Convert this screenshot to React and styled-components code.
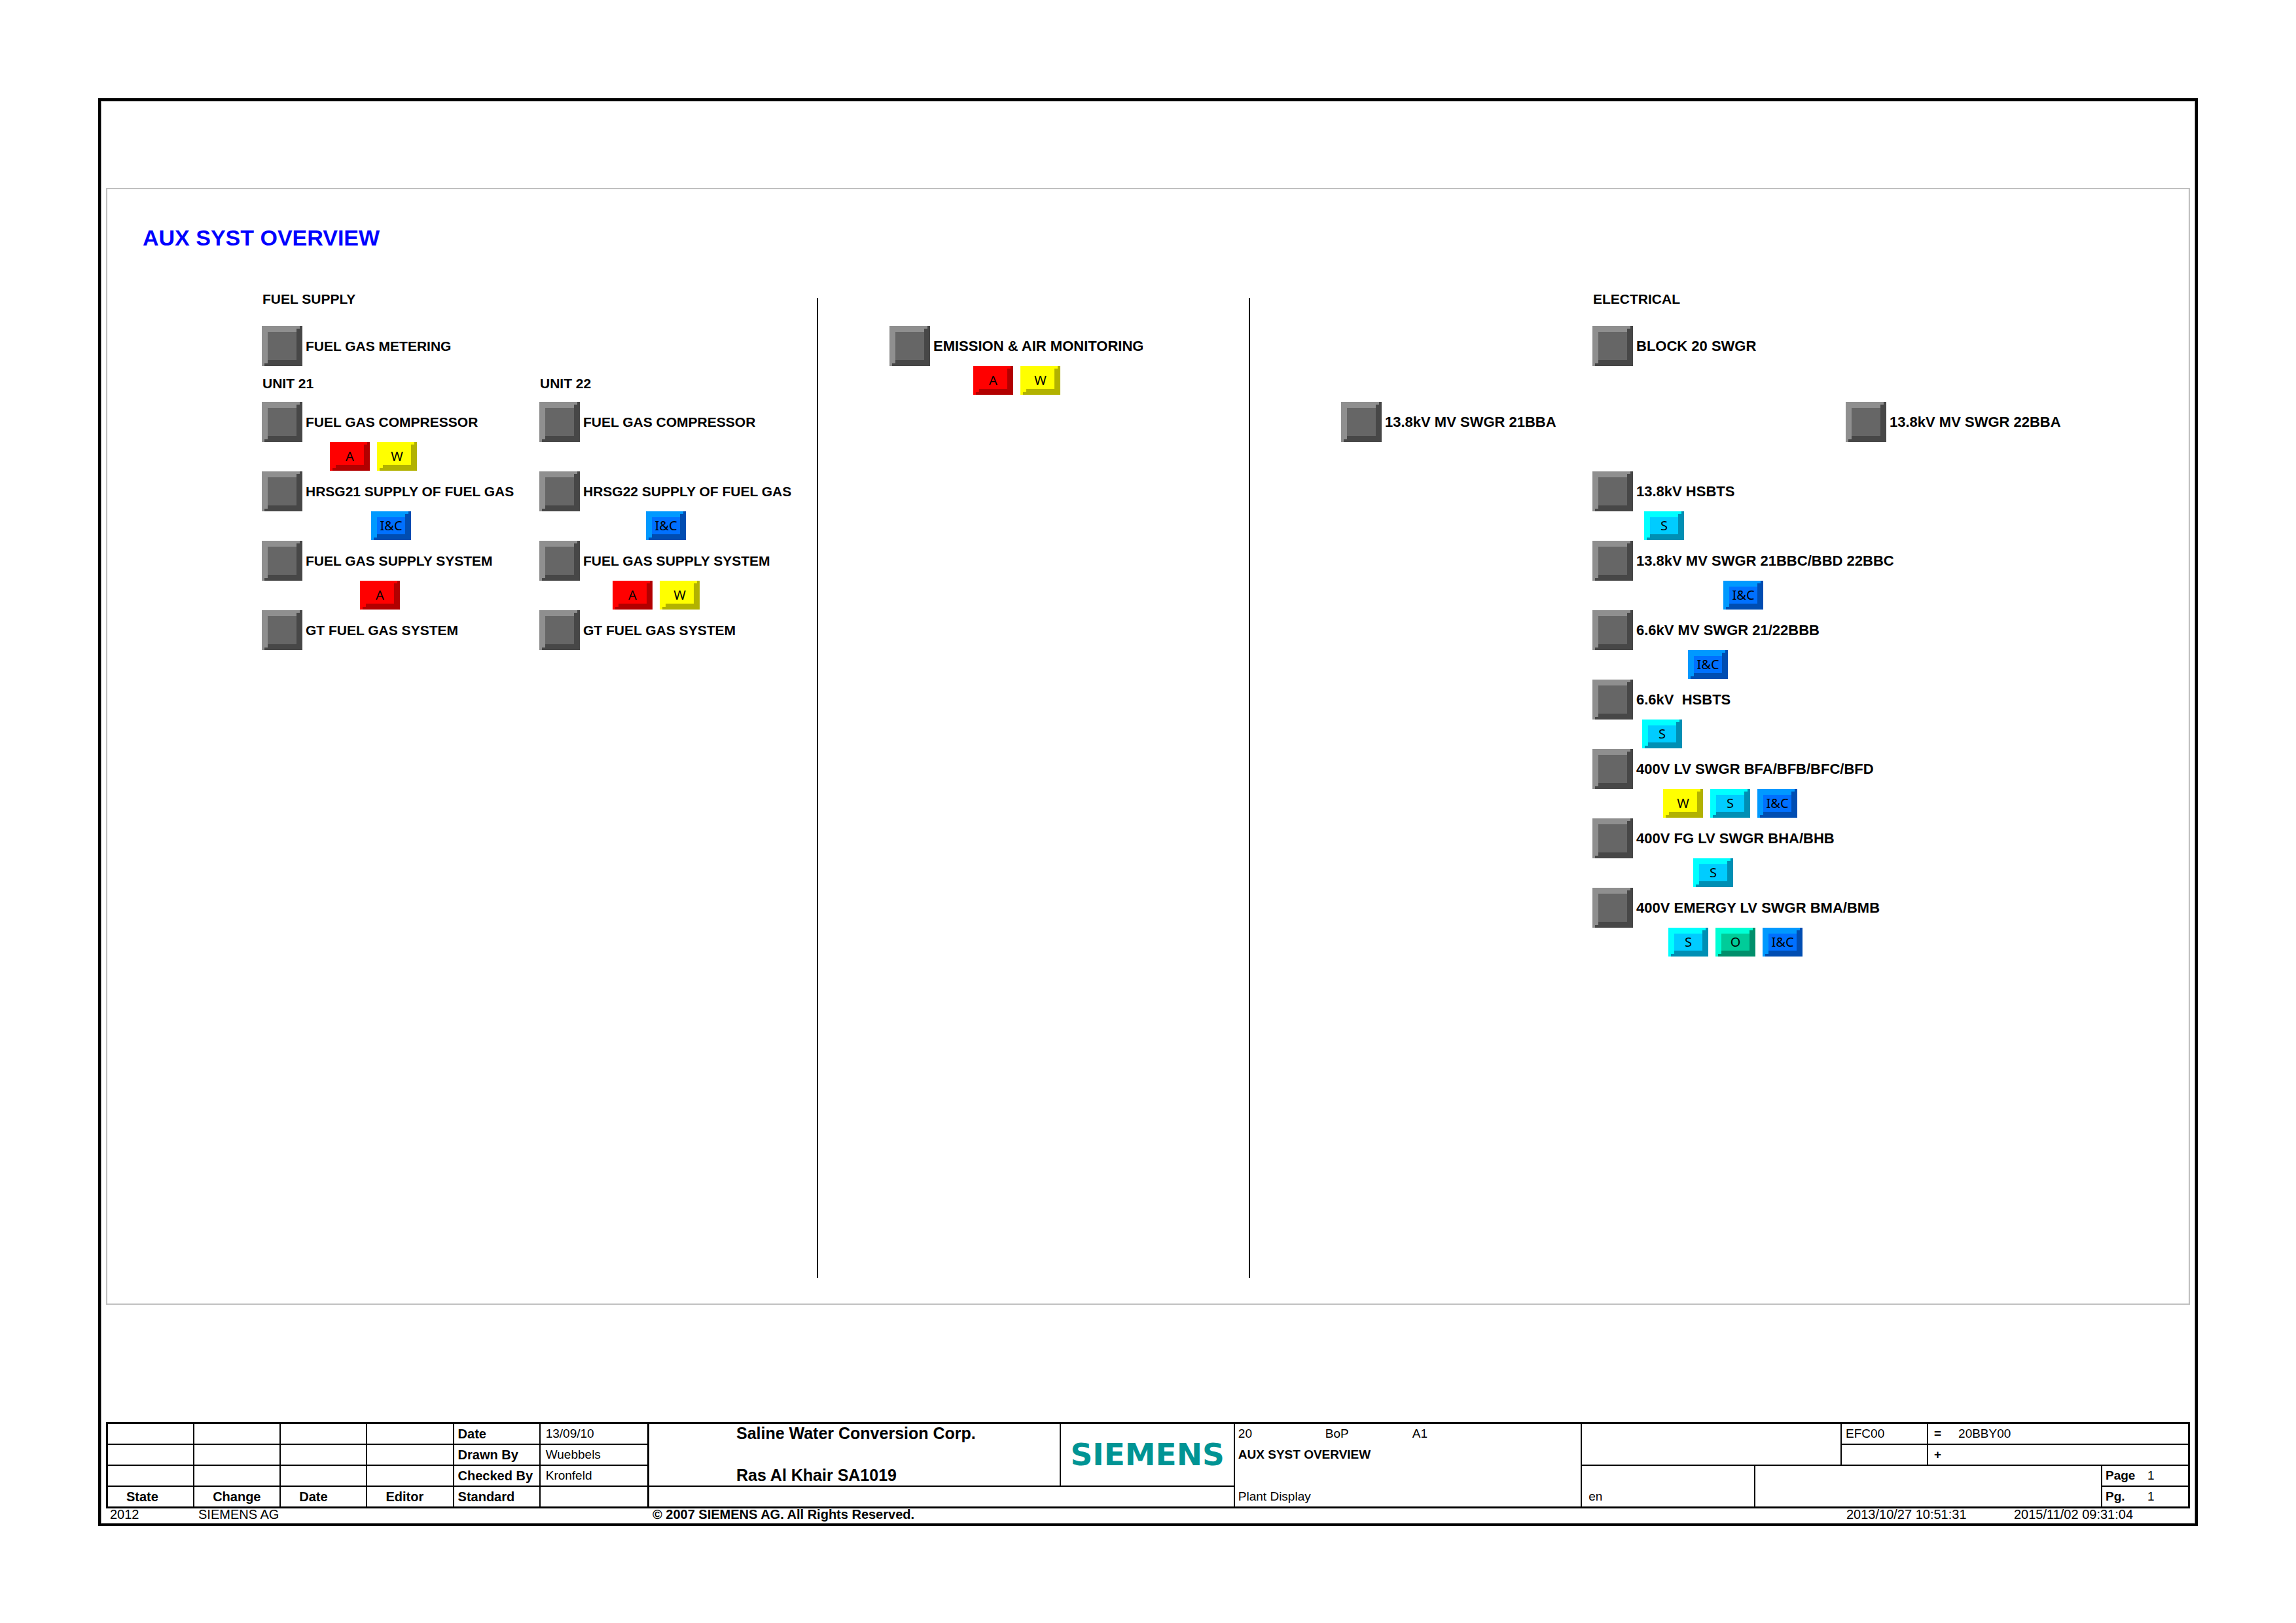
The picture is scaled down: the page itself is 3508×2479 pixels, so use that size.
import React from 'react';
import styled, { createGlobalStyle, css } from 'styled-components';

const GlobalStyle = createGlobalStyle`
  *, *::before, *::after { box-sizing: border-box; }
  body {
    margin: 0;
    background: #fff;
    color: #000;
    font-family: "Liberation Sans", Arial, Helvetica, sans-serif;
  }
`;

const TONES = {
  node: { face: '#666666', light: '#8f8f8f', dark: '#474747' },
  A: { face: '#ff0000', light: '#ff0000', dark: '#b20000' },
  W: { face: '#ffff00', light: '#ffff00', dark: '#b2b200' },
  S: { face: '#00ccff', light: '#00ffff', dark: '#008fb4' },
  O: { face: '#00cc99', light: '#00ffd5', dark: '#008f6b' },
  'I&C': { face: '#0070ff', light: '#0099ff', dark: '#004db2' },
};

/* Two stepped rings: light on the left and top, dark on the right and bottom. */
const bevel = ({ $tone }) => {
  const { face, light, dark } = TONES[$tone];
  return css`
    background: ${face};
    box-shadow:
      inset 4px 0 0 ${light}, inset -4px 0 0 ${dark},
      inset 0 4px 0 ${light}, inset 0 -4px 0 ${dark},
      inset 9px 0 0 ${light}, inset -9px 0 0 ${dark},
      inset 0 9px 0 ${light}, inset 0 -9px 0 ${dark};
  `;
};

const Page = styled.div`
  display: flex;
  min-height: 100vh;
  padding: 150px 150px 148px;
`;

const Frame = styled.div`
  flex: 1;
  min-width: 0;
  display: flex;
  flex-direction: column;
  padding: 133px 8px 0;
  border: 4px solid #000;
  box-shadow: inset 0 0 0 1px #999;
`;

const Board = styled.main`
  flex: 1;
  display: flex;
  flex-direction: column;
  margin-bottom: 179px;
  padding: 54px 0 39px;
  border: 2px solid #c0c0c0;
`;

const Title = styled.h1`
  margin: 0 0 62px;
  padding-left: 54px;
  font-size: 34px;
  line-height: 40px;
  font-weight: bold;
  color: #0000ff;
`;

const Columns = styled.div`
  flex: 1;
  display: grid;
  grid-template-columns:
    minmax(0, 1084fr) 2px minmax(0, 658fr) 2px minmax(0, 1434fr);
`;

const Divider = styled.div`
  margin-top: 10px;
  background: #000;
`;

const FuelSection = styled.section`
  display: grid;
  grid-template-columns: minmax(0, 1fr) minmax(0, 1fr);
  align-content: start;
  padding-left: 236px;
  font-size: 21px;
`;

const EmissionSection = styled.section`
  padding: 53px 0 0 109px;
  font-size: 22px;
`;

const ElectricalSection = styled.section`
  display: grid;
  grid-template-columns: minmax(0, 384fr) minmax(0, 387fr) minmax(0, 524fr);
  align-content: start;
  padding-left: 139px;
  font-size: 22px;
`;

const SectionHeading = styled.h2`
  grid-column: ${({ $col }) => $col} / -1;
  margin: 0 0 29px;
  padding-left: 1px;
  font-size: 21px;
  line-height: 24px;
`;

const UnitHeading = styled.h3`
  margin: 0;
  padding: 15px 0 16px 1px;
  font-size: 21px;
  line-height: 24px;
`;

const Node = styled.div`
  grid-column: ${({ $col }) => $col || 'auto'};
  padding-bottom: ${({ $after }) => $after || 0}px;
`;

const NodeRow = styled.div`
  display: flex;
  align-items: center;
  gap: 5px;
`;

const NodeButton = styled.button`
  flex: none;
  width: 62px;
  height: 61px;
  padding: 0;
  border: 0;
  cursor: pointer;
  ${bevel}
`;

const NodeLabel = styled.label`
  line-height: 24px;
  font-weight: bold;
  white-space: pre;
`;

const Chips = styled.div`
  display: flex;
  gap: 11px;
  height: 45px;
  padding-left: ${({ $indent }) => $indent}px;
`;

const Chip = styled.button`
  width: 61px;
  height: 44px;
  padding: 0;
  border: 0;
  font-family: "Noto Sans", "Open Sans", sans-serif;
  font-size: 20px;
  line-height: 24px;
  color: #000;
  cursor: pointer;
  ${bevel}
`;

const TitleBlock = styled.section`
  display: grid;
  grid-template-columns:
    minmax(0, 828fr) minmax(0, 896fr) minmax(0, 531fr) minmax(0, 927fr);
  border: 3px solid #000;
  font-size: 19px;
  line-height: 30px;
`;

const RevisionTable = styled.table`
  width: 100%;
  table-layout: fixed;
  border-collapse: separate;
  border-spacing: 0;
  border-right: 1px solid #000;

  th, td {
    height: 32px;
    padding: 0 0 0 8px;
    border-right: 2px solid #000;
    border-bottom: 2px solid #000;
    text-align: left;
    white-space: nowrap;
  }
  th {
    font-size: 20px;
  }
  tr:last-child > * {
    height: 30px;
    border-bottom: 0;
  }
`;

const NameCell = styled.th`
  &&& { padding-left: 6px; }
`;

const HeadCell = styled.th`
  &&& { padding-left: 28px; }
`;

const Panel = styled.div`
  display: grid;
  grid-template-columns: ${({ $cols }) => $cols || 'minmax(0, 1fr)'};
  grid-template-rows: ${({ $rows }) => $rows || 'auto'};
  border-right: ${({ $line }) => ($line ? 2 : 0)}px solid #000;
`;

const Cell = styled.div`
  display: flex;
  align-items: ${({ $end }) => ($end ? 'flex-end' : 'flex-start')};
  grid-column: ${({ $col }) => $col || 'auto'};
  padding-left: ${({ $pad }) => $pad || 0}px;
  border-right: ${({ $right }) => ($right ? 2 : 0)}px solid #000;
  border-bottom: ${({ $bottom }) => ($bottom ? 2 : 0)}px solid #000;
  font-weight: ${({ $bold }) => ($bold ? 'bold' : 'normal')};
  white-space: nowrap;
`;

const Project = styled.div`
  display: flex;
  flex-direction: column;
  gap: 36px;
  padding-left: 133px;
  border-right: 2px solid #000;
  border-bottom: 2px solid #000;
  font-size: 25px;
  line-height: 28px;
  font-weight: bold;
  white-space: nowrap;
`;

const Logo = styled.div`
  display: flex;
  align-items: center;
  justify-content: center;
  border-bottom: 2px solid #000;
  font-family: "DejaVu Sans", Verdana, sans-serif;
  font-size: 47px;
  line-height: 48px;
  font-weight: bold;
  color: #009494;
`;

const Field = styled.span`
  flex: none;
  width: ${({ $width }) => $width}px;
  font-weight: ${({ $bold }) => ($bold ? 'bold' : 'normal')};
`;

const Footer = styled.footer`
  display: grid;
  grid-template-columns:
    minmax(0, 135fr) minmax(0, 694fr) minmax(0, 1824fr) minmax(0, 256fr) minmax(0, 269fr);
  padding: 0 0 4px 6px;
  font-size: 20px;
  line-height: 19px;
  white-space: nowrap;
`;

const unit21 = [
  { id: 'u21-comp', text: 'FUEL GAS COMPRESSOR', chips: ['A', 'W'], indent: 104 },
  { id: 'u21-hrsg', text: 'HRSG21 SUPPLY OF FUEL GAS', chips: ['I&C'], indent: 167 },
  { id: 'u21-supply', text: 'FUEL GAS SUPPLY SYSTEM', chips: ['A'], indent: 150 },
  { id: 'u21-gt', text: 'GT FUEL GAS SYSTEM' },
];

const unit22 = [
  { id: 'u22-comp', text: 'FUEL GAS COMPRESSOR', chips: [] },
  { id: 'u22-hrsg', text: 'HRSG22 SUPPLY OF FUEL GAS', chips: ['I&C'], indent: 163 },
  { id: 'u22-supply', text: 'FUEL GAS SUPPLY SYSTEM', chips: ['A', 'W'], indent: 112 },
  { id: 'u22-gt', text: 'GT FUEL GAS SYSTEM' },
];

const switchgear = [
  { id: 'hsbts-138', text: '13.8kV HSBTS', chips: ['S'], indent: 79 },
  { id: 'mv-138', text: '13.8kV MV SWGR 21BBC/BBD 22BBC', chips: ['I&C'], indent: 200 },
  { id: 'mv-66', text: '6.6kV MV SWGR 21/22BBB', chips: ['I&C'], indent: 146 },
  { id: 'hsbts-66', text: '6.6kV  HSBTS', chips: ['S'], indent: 76 },
  { id: 'lv-400', text: '400V LV SWGR BFA/BFB/BFC/BFD', chips: ['W', 'S', 'I&C'], indent: 108 },
  { id: 'fg-400', text: '400V FG LV SWGR BHA/BHB', chips: ['S'], indent: 154 },
  { id: 'em-400', text: '400V EMERGY LV SWGR BMA/BMB', chips: ['S', 'O', 'I&C'], indent: 116 },
];

function SystemNode({ id, text, chips, indent = 0, col, after }) {
  return (
    <Node $col={col} $after={after}>
      <NodeRow>
        <NodeButton id={id} type="button" $tone="node" />
        <NodeLabel htmlFor={id}>{text}</NodeLabel>
      </NodeRow>
      {chips && (
        <Chips $indent={indent}>
          {chips.map((c) => (
            <Chip key={c} type="button" $tone={c}>{c}</Chip>
          ))}
        </Chips>
      )}
    </Node>
  );
}

const Col = styled.col`
  width: ${({ $share }) => $share}%;
`;

function Revisions() {
  const blanks = [0, 1, 2, 3];
  const rows = [
    ['Date', '13/09/10'],
    ['Drawn By', 'Wuebbels'],
    ['Checked By', 'Kronfeld'],
  ];
  return (
    <RevisionTable>
      <colgroup>
        {[16, 16, 16, 16, 16, 20].map((share, i) => (
          <Col key={i} $share={share} />
        ))}
      </colgroup>
      <tbody>
        {rows.map(([name, value]) => (
          <tr key={name}>
            {blanks.map((b) => <td key={b} />)}
            <NameCell scope="row">{name}</NameCell>
            <td>{value}</td>
          </tr>
        ))}
        <tr>
          <HeadCell>State</HeadCell>
          <HeadCell>Change</HeadCell>
          <HeadCell>Date</HeadCell>
          <HeadCell>Editor</HeadCell>
          <NameCell scope="row">Standard</NameCell>
          <td />
        </tr>
      </tbody>
    </RevisionTable>
  );
}

export default function App() {
  return (
    <>
      <GlobalStyle />
      <Page>
        <Frame>
          <Board>
            <Title>AUX SYST OVERVIEW</Title>
            <Columns>
              <FuelSection>
                <SectionHeading $col={1}>FUEL SUPPLY</SectionHeading>
                <SystemNode id="fuel-metering" text="FUEL GAS METERING" col="1 / -1" />
                <UnitHeading>UNIT 21</UnitHeading>
                <UnitHeading>UNIT 22</UnitHeading>
                {unit21.map((node, i) => (
                  <React.Fragment key={node.id}>
                    <SystemNode {...node} />
                    <SystemNode {...unit22[i]} />
                  </React.Fragment>
                ))}
              </FuelSection>
              <Divider />
              <EmissionSection>
                <SystemNode
                  id="emission"
                  text="EMISSION & AIR MONITORING"
                  chips={['A', 'W']}
                  indent={128}
                />
              </EmissionSection>
              <Divider />
              <ElectricalSection>
                <SectionHeading $col={2}>ELECTRICAL</SectionHeading>
                <SystemNode id="block20" text="BLOCK 20 SWGR" col="2 / -1" after={55} />
                <SystemNode id="mv-21bba" text="13.8kV MV SWGR 21BBA" chips={[]} col="1" />
                <SystemNode id="mv-22bba" text="13.8kV MV SWGR 22BBA" chips={[]} col="3" />
                {switchgear.map((node) => (
                  <SystemNode key={node.id} {...node} col="2 / -1" />
                ))}
              </ElectricalSection>
            </Columns>
          </Board>

          <TitleBlock>
            <Revisions />
            <Panel $line $rows="96px 30px">
              <Panel $cols="minmax(0, 631fr) minmax(0, 264fr)">
                <Project>
                  <span>Saline Water Conversion Corp.</span>
                  <span>Ras Al Khair SA1019</span>
                </Project>
                <Logo>SIEMENS</Logo>
              </Panel>
              <Cell />
            </Panel>
            <Panel $line $rows="32px 64px 30px">
              <Cell $pad={5}>
                <Field $width={133}>20</Field>
                <Field $width={133}>BoP</Field>
                <Field $width={133}>A1</Field>
              </Cell>
              <Cell $pad={5} $bold>AUX SYST OVERVIEW</Cell>
              <Cell $pad={5}>Plant Display</Cell>
            </Panel>
            <Panel $rows="64px 62px">
              <Panel
                $cols="minmax(0, 397fr) minmax(0, 132fr) minmax(0, 397fr)"
                $rows="32px 32px"
              >
                <Cell $right />
                <Cell $right $bottom $pad={6}>EFC00</Cell>
                <Cell $bottom $pad={9}>
                  <Field $width={37} $bold>=</Field>
                  <Field $width={133}>20BBY00</Field>
                </Cell>
                <Cell $right $bottom />
                <Cell $right $bottom />
                <Cell $bottom $pad={9} $bold>+</Cell>
              </Panel>
              <Panel $cols="minmax(0, 265fr) minmax(0, 530fr) minmax(0, 131fr)">
                <Cell $right $end $pad={10}>en</Cell>
                <Cell $right />
                <Panel $rows="32px 30px">
                  <Cell $bottom $pad={5}>
                    <Field $width={64} $bold>Page</Field>
                    <Field $width={30}>1</Field>
                  </Cell>
                  <Cell $pad={5}>
                    <Field $width={64} $bold>Pg.</Field>
                    <Field $width={30}>1</Field>
                  </Cell>
                </Panel>
              </Panel>
            </Panel>
          </TitleBlock>

          <Footer>
            <span>2012</span>
            <span>SIEMENS AG</span>
            <strong>© 2007 SIEMENS AG. All Rights Reserved.</strong>
            <span>2013/10/27 10:51:31</span>
            <span>2015/11/02 09:31:04</span>
          </Footer>
        </Frame>
      </Page>
    </>
  );
}
